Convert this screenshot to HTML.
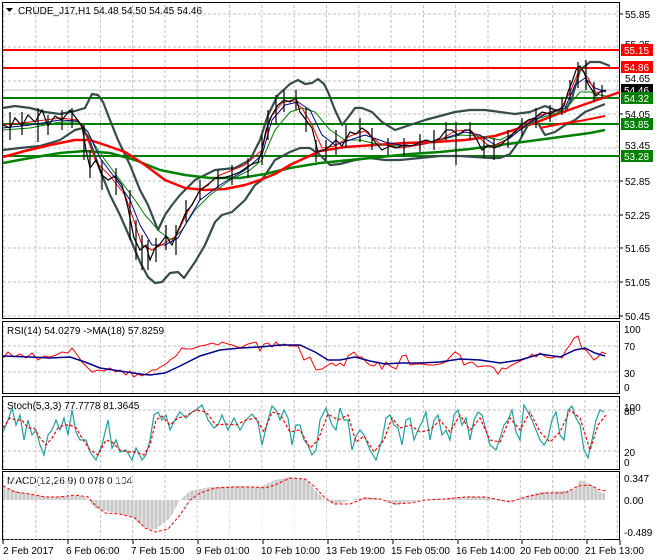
<!DOCTYPE html>
<html><head><meta charset="utf-8"><style>
body{margin:0;background:#fff;width:660px;height:560px;overflow:hidden}
svg{display:block}
text{font-family:"Liberation Sans",sans-serif;font-size:10px;fill:#000}
</style></head><body>
<svg width="660" height="560" viewBox="0 0 660 560" xmlns="http://www.w3.org/2000/svg">
<defs>
<pattern id="vg" x="3" y="0" width="32.3" height="560" patternUnits="userSpaceOnUse">
<line x1="0.5" y1="0" x2="0.5" y2="560" stroke="#c0c0c0" stroke-dasharray="3,2"/>
</pattern>
</defs>
<rect width="660" height="560" fill="#fff"/>
<rect x="3" y="3" width="617" height="314" fill="url(#vg)"/>
<rect x="3" y="323" width="617" height="70" fill="url(#vg)"/>
<rect x="3" y="398" width="617" height="71" fill="url(#vg)"/>
<rect x="3" y="473" width="617" height="66" fill="url(#vg)"/>
<g stroke="#c0c0c0" stroke-dasharray="3,2">
<line x1="3" y1="14" x2="620" y2="14"/><line x1="3" y1="47" x2="620" y2="47"/>
<line x1="3" y1="81" x2="620" y2="81"/><line x1="3" y1="114" x2="620" y2="114"/>
<line x1="3" y1="148" x2="620" y2="148"/><line x1="3" y1="181" x2="620" y2="181"/>
<line x1="3" y1="215" x2="620" y2="215"/><line x1="3" y1="248" x2="620" y2="248"/>
<line x1="3" y1="282" x2="620" y2="282"/><line x1="3" y1="316" x2="620" y2="316"/>
<line x1="3" y1="346" x2="620" y2="346"/><line x1="3" y1="372" x2="620" y2="372"/>
<line x1="3" y1="410" x2="620" y2="410"/><line x1="3" y1="451" x2="620" y2="451"/>
</g>
<line x1="3" y1="90" x2="620" y2="90" stroke="#c0c0c0"/>
<g fill="none" stroke="#000">
<rect x="2.5" y="2.5" width="617" height="316"/>
<rect x="2.5" y="321.5" width="617" height="72"/>
<rect x="2.5" y="396.5" width="617" height="73"/>
<rect x="2.5" y="471.5" width="617" height="68"/>
</g>
<line x1="620" y1="540" x2="620" y2="545" stroke="#000"/>
<g stroke-width="2">
<line x1="3" y1="50" x2="620" y2="50" stroke="#ff0000"/>
<line x1="3" y1="68" x2="620" y2="68" stroke="#ff0000"/>
<line x1="3" y1="98" x2="620" y2="98" stroke="#008000"/>
<line x1="3" y1="124" x2="620" y2="124" stroke="#008000"/>
<line x1="3" y1="156" x2="620" y2="156" stroke="#008000"/>
</g>
<g fill="none" stroke="#364c4c" stroke-width="2.2" stroke-linejoin="round">
<polyline points="3,108 15,106 30,108 45,112 60,114 75,111 85,108 92,94 98,95 103,102 110,120 118,140 130,165 140,190 148,205 158,230 165,215 172,205 180,195 195,180 215,170 235,168 250,160 260,140 268,115 278,95 290,84 298,80 305,84 312,83 318,79 324,84 328,92 335,110 342,125 350,115 355,108 362,108 372,112 382,122 395,130 410,125 425,120 440,116 455,112 470,110 485,110 500,112 515,114 530,112 545,106 555,110 565,112 572,98 580,70 590,62 600,62 610,66"/>
<polyline points="3,150 20,148 40,146 60,140 75,130 83,128 90,142 100,170 110,195 120,215 130,238 140,262 148,277 155,283 162,282 170,273 178,272 184,278 195,262 205,245 215,222 222,215 232,212 245,200 255,185 262,180 275,160 290,152 300,148 310,148 320,155 330,165 340,164 355,160 370,158 385,160 400,160 420,158 440,156 460,156 475,157 490,158 500,158 510,154 520,140 528,125 535,118 545,135 555,132 565,125 575,120 585,112 595,108 605,104"/>
</g>
<g fill="none" stroke-width="2.5" stroke-linejoin="round">
<polyline stroke="#008000" points="3,163 30,158 60,153 85,151 110,153 135,160 160,170 185,175 210,178 240,178 265,174 290,168 320,163 350,160 380,157 410,154 440,152 470,149 500,145 530,141 560,137 590,133 605,130"/>
<polyline stroke="#ff0000" points="3,157 25,151 50,145 75,140 90,140 105,145 125,152 145,165 165,180 185,188 205,190 225,189 245,185 260,180 275,174 290,165 305,158 320,151 345,147 375,145 405,143 435,142 465,140 495,136 520,128 540,121 560,113 580,106 600,99 620,92"/>
<polyline stroke="#ff0000" stroke-width="2" points="540,128 560,124 580,121 600,117 605,116"/>
</g>
<g fill="none" stroke-linejoin="round">
<polyline stroke="#008000" stroke-width="1" points="3,130 30,128 60,122 78,122 90,138 105,160 120,180 135,200 145,215 160,232 172,240 182,230 195,210 210,195 230,180 250,170 262,160 275,130 290,112 302,108 315,112 330,130 345,140 360,140 380,145 400,146 420,145 440,140 460,135 480,136 500,140 520,130 540,118 560,112 570,104 580,92 590,92 600,95 606,96"/>
<polyline stroke="#00008b" stroke-width="1" points="3,128 30,125 60,120 78,121 88,132 100,158 115,178 130,200 140,225 152,245 165,245 178,238 188,220 200,200 220,185 245,170 262,155 272,120 285,105 298,102 310,110 322,135 335,145 350,140 365,135 385,142 405,146 425,144 445,138 465,132 480,135 495,145 510,138 530,122 550,112 565,108 575,85 585,78 595,88 606,92"/>
<polyline stroke="#ff0000" stroke-width="1" points="3,125 30,122 60,118 78,120 86,135 96,162 110,176 125,195 133,218 142,245 152,250 163,244 176,236 186,215 200,190 220,175 245,165 262,150 270,118 282,103 292,100 302,108 312,125 322,148 335,146 350,136 365,131 380,144 400,148 420,145 440,140 455,131 470,130 490,147 505,141 520,126 540,115 560,110 570,92 580,68 588,78 596,93 606,90"/>
</g>
<g fill="none" stroke="#000" stroke-width="1.2">
<polyline points="3,125 10,128 15,118 22,126 28,115 35,122 42,110 48,126 55,116 62,120 70,110 76,118 82,126 86,150 90,168 96,160 102,175 108,180 115,176 122,185 128,208 134,238 140,250 146,245 150,260 155,248 160,244 166,236 172,245 176,235 180,226 186,212 192,205 200,190 208,185 215,178 222,178 230,176 240,172 250,165 258,162 262,150 266,130 272,115 278,105 284,100 290,102 296,98 300,112 306,120 312,128 318,152 324,150 330,146 336,140 342,146 350,132 356,134 362,128 368,132 375,142 382,150 390,146 396,148 405,145 412,146 420,142 426,140 432,142 440,138 446,130 452,130 458,135 465,130 470,130 476,138 482,150 488,145 494,148 500,146 506,140 512,135 520,126 528,120 535,118 542,112 550,114 558,110 564,106 568,92 572,82 576,70 580,66 584,72 588,84 592,90 596,96 600,92 606,90"/>
<path d="M10,112V140M22,112V135M38,108V142M48,115V135M62,110V130M72,108V128M84,125V160M90,150V178M102,160V190M116,168V195M130,190V240M136,220V260M142,235V270M148,240V270M156,238V262M166,225V250M176,225V255M186,200V222M200,180V200M218,170V188M232,165V185M248,158V178M262,135V165M268,110V140M276,95V125M284,90V112M296,90V110M306,108V132M316,140V162M326,140V160M336,130V155M346,125V148M360,118V142M372,128V150M388,138V155M404,138V156M420,134V152M434,130V150M446,122V140M456,122V165M470,122V140M484,138V158M494,138V160M508,130V148M522,118V136M536,108V128M550,105V122M562,98V115M570,80V100M578,62V88M586,60V90M594,82V102M602,85V98"/>
</g>
<g>
<text x="625" y="18">55.85</text>
<text x="625" y="48">55.25</text>
<text x="625" y="82">54.65</text>
<text x="625" y="118">54.05</text>
<text x="625" y="149">53.45</text>
<text x="625" y="185">52.85</text>
<text x="625" y="219">52.25</text>
<text x="625" y="252">51.65</text>
<text x="625" y="286">51.05</text>
<text x="625" y="320">50.45</text>
</g>
<rect x="621" y="44" width="32" height="12" fill="#ff0000"/><text x="624" y="54" style="fill:#fff">55.15</text>
<rect x="621" y="61" width="32" height="12" fill="#ff0000"/><text x="624" y="71" style="fill:#fff">54.86</text>
<rect x="621" y="84" width="32" height="12" fill="#000"/><text x="624" y="94" style="fill:#fff">54.46</text>
<rect x="621" y="92" width="32" height="12" fill="#008000"/><text x="624" y="102" style="fill:#fff">54.32</text>
<rect x="621" y="118" width="32" height="12" fill="#008000"/><text x="624" y="128" style="fill:#fff">53.85</text>
<rect x="621" y="150" width="32" height="12" fill="#008000"/><text x="624" y="160" style="fill:#fff">53.28</text>
<g stroke="#000"><line x1="620" y1="14" x2="623" y2="14"/><line x1="620" y1="114" x2="623" y2="114"/><line x1="620" y1="181" x2="623" y2="181"/><line x1="620" y1="215" x2="623" y2="215"/><line x1="620" y1="248" x2="623" y2="248"/><line x1="620" y1="282" x2="623" y2="282"/><line x1="620" y1="316" x2="623" y2="316"/></g>
<path d="M6,8h7l-3.5,4z" fill="#000"/>
<text x="18" y="14">CRUDE_J17,H1  54.48 54.50 54.45 54.46</text>
<text x="7" y="334">RSI(14) 54.0279  -&gt;MA(18) 57.8259</text>
<polyline fill="none" stroke="#ff0000" stroke-width="1" points="3,358 8,352 14,357 20,354 26,358 32,353 38,360 44,356 50,357 56,355 62,352 68,353 72,348 78,356 82,362 88,368 92,372 98,370 104,371 110,368 116,372 120,370 126,375 130,371 134,377 138,374 142,376 148,373 152,370 156,370 162,366 166,364 170,360 176,356 182,348 186,349 192,349 200,346 206,345 212,343 218,345 222,342 228,344 232,345 240,348 248,344 256,342 260,351 264,344 268,343 272,347 276,342 280,346 284,344 290,346 298,346 304,360 310,357 316,370 322,369 328,365 332,363 336,366 340,363 344,366 348,356 354,352 358,357 362,357 366,362 370,365 374,366 378,362 382,369 386,362 390,366 396,369 402,356 406,355 410,365 416,364 422,364 428,365 434,365 440,364 446,362 450,357 455,352 460,355 464,365 468,363 472,362 478,367 484,366 490,366 494,368 498,374 502,368 506,369 510,366 516,363 522,360 528,358 532,354 536,357 540,353 546,357 552,358 558,356 562,358 566,350 570,345 574,338 578,336 582,349 586,350 590,355 594,360 598,357 602,352 606,354"/>
<polyline fill="none" stroke="#00008b" stroke-width="1.5" points="3,356 30,357 50,358 70,357 85,362 100,368 120,371 140,374 150,375 165,373 180,366 200,356 220,350 240,348 260,347 280,345 300,345 315,352 328,360 340,360 355,357 370,361 385,364 400,363 420,363 440,362 460,359 480,360 500,363 520,360 540,354 560,357 575,350 585,348 595,353 605,356"/>
<g><text x="624" y="333">100</text><text x="624" y="350">70</text><text x="624" y="377">30</text><text x="624" y="391">0</text></g>
<text x="7" y="409">Stoch(5,3,3) 77.7778 81.3645</text>
<polyline fill="none" stroke="#20a0a0" stroke-width="1.2" points="3,432 8,420 12,408 16,425 20,415 24,440 28,420 32,435 36,430 40,445 44,455 48,435 52,430 56,420 60,430 64,418 68,435 72,410 76,432 80,440 86,440 90,452 96,460 102,445 108,420 112,448 116,440 120,452 126,450 132,460 136,448 142,460 146,455 150,440 154,415 158,412 162,420 166,415 170,430 176,418 180,412 186,418 192,412 196,410 202,405 208,420 214,428 218,425 222,415 228,430 234,418 240,430 246,420 252,414 258,422 262,445 268,420 272,406 276,410 280,420 284,410 288,418 292,445 296,425 300,425 304,440 308,445 312,455 316,450 320,420 326,408 332,425 336,430 340,408 344,420 348,420 352,450 356,436 360,430 364,435 370,450 376,460 382,440 386,418 390,415 394,425 398,428 402,445 406,420 410,418 414,440 418,430 422,422 426,412 430,440 434,420 438,415 442,435 446,430 450,440 454,415 458,410 462,425 466,418 470,440 474,420 478,412 482,415 486,430 490,445 496,450 500,438 504,425 508,420 512,410 516,432 520,440 524,405 528,412 532,420 536,430 540,440 544,445 548,438 552,420 556,412 560,435 564,440 568,410 572,406 576,418 580,425 584,450 588,458 592,440 596,420 600,410 604,412"/>
<polyline fill="none" stroke="#ff0000" stroke-width="1.2" stroke-dasharray="3,2" points="3,428 10,418 16,420 22,420 28,428 34,428 40,438 46,445 52,438 58,428 64,425 70,425 76,428 82,438 90,450 98,455 106,440 112,442 120,450 128,452 136,452 144,455 150,445 156,420 162,416 170,425 178,418 186,416 196,410 206,412 216,425 226,424 236,425 246,420 256,418 264,432 272,412 280,414 290,432 300,430 310,448 318,440 328,414 338,420 348,415 356,442 364,436 374,452 384,440 392,418 400,428 410,425 420,432 430,430 440,420 450,432 460,415 470,430 480,418 490,440 500,442 510,418 520,430 530,412 540,432 550,442 560,432 570,410 580,418 590,450 598,425 606,415"/>
<g><text x="624" y="411">100</text><text x="624" y="415">80</text><text x="624" y="456">20</text><text x="624" y="466">0</text></g>
<text x="7" y="484">MACD(12,26,9) 0.078 0.104</text>
<path fill="#c8c8c8" d="M3,500V488L30,494L50,497L65,496L80,496L88,499V500ZM88,500L95,508L110,512L130,516L145,528L155,530L170,518L180,500ZM180,500L190,491L210,487L240,486L260,487L275,480L290,477L305,479L320,495L325,500ZM325,500L335,505L350,500L365,497L380,499L395,505L410,502L420,500ZM420,500L450,498L470,496L490,498L500,501L510,502L520,498L540,492L560,491L575,490L580,480L590,484L600,492L605,493V500Z"/>
<g stroke="#fff" stroke-width="0.8"><path d="M6,475V540M10,475V540M14,475V540M18,475V540M22,475V540M26,475V540M30,475V540M34,475V540M38,475V540M42,475V540M46,475V540M50,475V540M54,475V540M58,475V540M62,475V540M66,475V540M70,475V540M74,475V540M78,475V540M82,475V540M86,475V540M90,475V540M94,475V540M98,475V540M102,475V540M106,475V540M110,475V540M114,475V540M118,475V540M122,475V540M126,475V540M130,475V540M134,475V540M138,475V540M142,475V540M146,475V540M150,475V540M154,475V540M158,475V540M162,475V540M166,475V540M170,475V540M174,475V540M178,475V540M182,475V540M186,475V540M190,475V540M194,475V540M198,475V540M202,475V540M206,475V540M210,475V540M214,475V540M218,475V540M222,475V540M226,475V540M230,475V540M234,475V540M238,475V540M242,475V540M246,475V540M250,475V540M254,475V540M258,475V540M262,475V540M266,475V540M270,475V540M274,475V540M278,475V540M282,475V540M286,475V540M290,475V540M294,475V540M298,475V540M302,475V540M306,475V540M310,475V540M314,475V540M318,475V540M322,475V540M326,475V540M330,475V540M334,475V540M338,475V540M342,475V540M346,475V540M350,475V540M354,475V540M358,475V540M362,475V540M366,475V540M370,475V540M374,475V540M378,475V540M382,475V540M386,475V540M390,475V540M394,475V540M398,475V540M402,475V540M406,475V540M410,475V540M414,475V540M418,475V540M422,475V540M426,475V540M430,475V540M434,475V540M438,475V540M442,475V540M446,475V540M450,475V540M454,475V540M458,475V540M462,475V540M466,475V540M470,475V540M474,475V540M478,475V540M482,475V540M486,475V540M490,475V540M494,475V540M498,475V540M502,475V540M506,475V540M510,475V540M514,475V540M518,475V540M522,475V540M526,475V540M530,475V540M534,475V540M538,475V540M542,475V540M546,475V540M550,475V540M554,475V540M558,475V540M562,475V540M566,475V540M570,475V540M574,475V540M578,475V540M582,475V540M586,475V540M590,475V540M594,475V540M598,475V540M602,475V540"/></g>
<polyline fill="none" stroke="#ff0000" stroke-width="1" stroke-dasharray="3,2" points="3,486 15,492 30,494 45,497 60,497 75,495 88,497 95,505 105,513 120,514 135,518 145,528 155,532 168,529 180,515 190,500 200,493 215,488 235,487 255,487 265,488 275,485 290,478 305,479 315,487 325,498 335,504 350,504 365,498 380,499 395,504 410,503 425,500 445,499 465,497 485,497 500,500 510,502 525,497 545,493 565,493 578,486 590,485 600,490 606,491"/>
<g><text x="624" y="482">0.347</text><text x="624" y="504">0.00</text><text x="624" y="536">-0.489</text></g>
<g stroke="#000"><line x1="3" y1="540" x2="3" y2="544"/><line x1="68" y1="540" x2="68" y2="544"/><line x1="133" y1="540" x2="133" y2="544"/><line x1="198" y1="540" x2="198" y2="544"/><line x1="263" y1="540" x2="263" y2="544"/><line x1="328" y1="540" x2="328" y2="544"/><line x1="393" y1="540" x2="393" y2="544"/><line x1="458" y1="540" x2="458" y2="544"/><line x1="522" y1="540" x2="522" y2="544"/><line x1="587" y1="540" x2="587" y2="544"/></g>
<g>
<text x="3" y="554">2 Feb 2017</text>
<text x="66" y="554">6 Feb 06:00</text>
<text x="131" y="554">7 Feb 15:00</text>
<text x="196" y="554">9 Feb 01:00</text>
<text x="261" y="554">10 Feb 10:00</text>
<text x="326" y="554">13 Feb 19:00</text>
<text x="391" y="554">15 Feb 05:00</text>
<text x="456" y="554">16 Feb 14:00</text>
<text x="520" y="554">20 Feb 00:00</text>
<text x="585" y="554">21 Feb 13:00</text>
</g>
</svg>
</body></html>
